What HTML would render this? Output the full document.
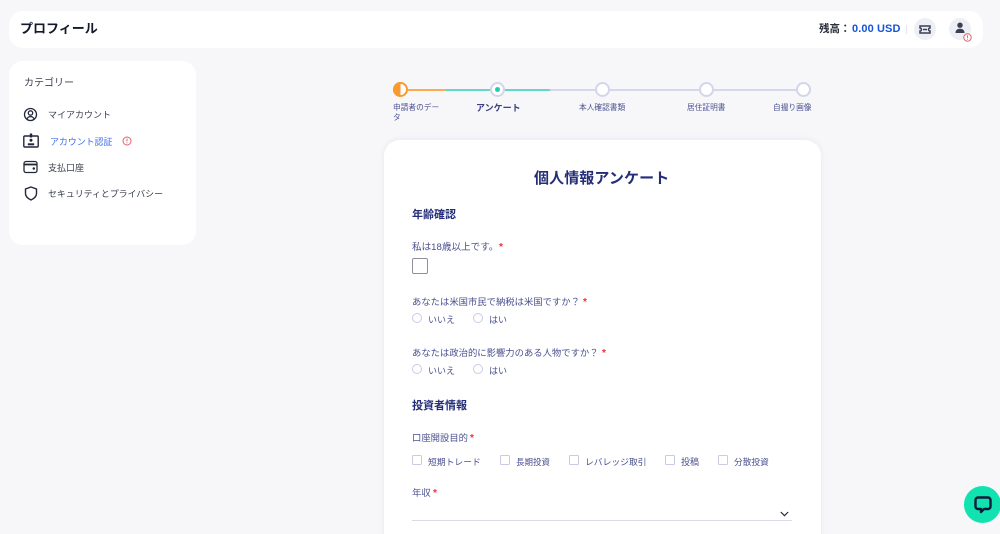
<!DOCTYPE html>
<html lang="ja"><head><meta charset="utf-8"><title>プロフィール</title>
<style>
html,body{margin:0;padding:0;width:1000px;height:534px;overflow:hidden}
body{background:#f7f7fa;font-family:"Liberation Sans","Noto Sans CJK JP",sans-serif}
#w{position:relative;width:1000px;height:534px;overflow:hidden}
.a{position:absolute;white-space:nowrap}
.box{position:absolute;background:#fff}
.lab{color:#4b5190;font-size:9.33px;line-height:14px}
.opt{color:#4b5190;font-size:9px;line-height:14px}
.side{color:#3a3f4c;font-size:9px;line-height:14px}
.step{color:#4b5190;font-size:7.7px;line-height:11px}
.h{color:#232d78;font-size:11px;font-weight:700;line-height:15px}
.r{color:#f0303c;font-size:10px;font-weight:700;line-height:14px}
.rad{position:absolute;width:8px;height:8px;border:1.2px solid #c9cbe4;border-radius:50%;background:#fff}
.chk{position:absolute;width:8px;height:8px;border:1.2px solid #c9cbe4;border-radius:1.5px;background:#fff}
.c{position:absolute;width:11px;height:11px;border:2px solid #d3d5ea;border-radius:50%;background:#fff}
.l{position:absolute;height:2px;top:89px}
</style></head><body><div id="w">
<div class="box" style="left:9px;top:11px;width:974px;height:37px;border-radius:14px"></div>
<div class="a" style="left:20px;top:20px;font-size:13px;font-weight:700;color:#14182a;line-height:18px">プロフィール</div>
<div class="a" style="left:819px;top:22px;font-size:10.5px;font-weight:700;color:#2b2f3a;line-height:14px">残高：</div>
<div class="a" style="left:852px;top:22px;font-size:11px;font-weight:700;color:#1553d8;line-height:14px;letter-spacing:.1px">0.00 USD</div>
<div class="box" style="left:906px;top:25px;width:1px;height:9px;background:#e6e7ee"></div>
<div class="box" style="left:914px;top:18px;width:22px;height:22px;border-radius:50%;background:#eeeff5"></div>
<svg class="a" style="left:919px;top:25px" width="12" height="9" viewBox="0 0 12 9" fill="none" stroke="#3a3f55" stroke-width="1.500"><path d="M1 1h10v2a1.500 1.500 0 0 0 0 3v2H1V6a1.500 1.500 0 0 0 0-3z"/><path d="M4 4.500h4"/></svg>
<div class="box" style="left:949px;top:18px;width:22px;height:22px;border-radius:50%;background:#eeeff5"></div>
<svg class="a" style="left:954px;top:22px" width="12" height="12" viewBox="0 0 12 12" fill="#3a3f55"><circle cx="6" cy="3.200" r="2.700"/><path d="M1.500 11c0-3 2-4.200 4.500-4.200s4.500 1.200 4.500 4.200z"/></svg>
<svg class="a" style="left:963px;top:33px" width="9" height="9" viewBox="0 0 9 9"><circle cx="4.500" cy="4.500" r="3.700" fill="#fff" stroke="#e4626a" stroke-width="1"/><path d="M4.500 2.400v2.500M4.500 5.800v.8" stroke="#e4626a" stroke-width="1"/></svg>

<div class="box" style="left:9px;top:61px;width:187px;height:184px;border-radius:14px"></div>
<div class="a" style="left:24px;top:76px;font-size:10px;color:#3a3f4c;line-height:15px">カテゴリー</div>
<svg class="a" style="left:23px;top:107px" width="15" height="15" viewBox="0 0 15 15" fill="none" stroke="#23273a" stroke-width="1.300"><circle cx="7.500" cy="7.500" r="6"/><circle cx="7.500" cy="6" r="2.200"/><path d="M3.800 12c.8-1.800 2-2.400 3.700-2.400s2.900.6 3.700 2.400"/></svg>
<div class="a side" style="left:48px;top:108px">マイアカウント</div>
<svg class="a" style="left:23px;top:133px" width="16" height="15" viewBox="0 0 16 15" fill="none" stroke="#23273a" stroke-width="1.400"><rect x=".8" y="3" width="14.400" height="11" rx="1"/><path d="M8 .5v4" stroke-width="2.400"/><circle cx="8" cy="7.200" r="1.500" fill="#23273a" stroke="none"/><path d="M4.800 11.300h6.400" stroke-width="2"/></svg>
<div class="a side" style="left:50px;top:135px;color:#3f6fe6;letter-spacing:-.1px">アカウント認証</div>
<svg class="a" style="left:122px;top:136px" width="10" height="10" viewBox="0 0 10 10"><circle cx="5" cy="5" r="4" fill="#fff" stroke="#e4626a" stroke-width="1"/><path d="M5 2.600v2.800M5 6.400v.9" stroke="#e4626a" stroke-width="1"/></svg>
<svg class="a" style="left:23px;top:160px" width="15" height="14" viewBox="0 0 15 14" fill="none" stroke="#23273a" stroke-width="1.300"><rect x="1" y="1.500" width="13" height="11" rx="2"/><path d="M1 4.500h13" stroke-width="1.800"/><circle cx="10.800" cy="8.500" r=".6" fill="#23273a"/></svg>
<div class="a side" style="left:48px;top:161px">支払口座</div>
<svg class="a" style="left:24px;top:186px" width="14" height="15" viewBox="0 0 14 15" fill="none" stroke="#23273a" stroke-width="1.400"><path d="M7 1l5.500 2v4.500c0 3-2.300 5-5.500 6.500C3.800 12.500 1.500 10.500 1.500 7.500V3z"/></svg>
<div class="a side" style="left:48px;top:187px;letter-spacing:-.1px">セキュリティとプライバシー</div>

<div class="l" style="left:401px;width:45px;background:#fbab52"></div>
<div class="l" style="left:446px;width:104px;background:#62d8c8"></div>
<div class="l" style="left:550px;width:254px;background:#d5d7ea"></div>
<div class="a" style="left:393px;top:82px;width:15px;height:15px;border-radius:50%;background:linear-gradient(90deg,#fb9a2c 50%,#fff 50%);box-shadow:inset 0 0 0 2px #fb9a2c"></div>
<div class="c" style="left:490px;top:82px"></div>
<div class="a" style="left:495px;top:87px;width:5px;height:5px;border-radius:50%;background:#22cdb8"></div>
<div class="c" style="left:595px;top:82px"></div>
<div class="c" style="left:699px;top:82px"></div>
<div class="c" style="left:796px;top:82px"></div>
<div class="a step" style="left:393px;top:103px;width:47px;white-space:normal;line-height:10px">申請者のデータ</div>
<div class="a" style="left:476px;top:102px;font-size:9px;font-weight:700;color:#3a4080;line-height:13px">アンケート</div>
<div class="a step" style="left:579px;top:102px">本人確認書類</div>
<div class="a step" style="left:687px;top:102px">居住証明書</div>
<div class="a step" style="left:773px;top:102px">自撮り画像</div>

<div class="box" style="left:384px;top:140px;width:437px;height:420px;border-radius:16px;box-shadow:0 -1px 6px rgba(60,60,90,.07)"></div>
<div class="a" style="left:534px;top:169px;font-size:15px;font-weight:700;color:#232d78;line-height:20px;letter-spacing:.1px">個人情報アンケート</div>
<div class="a h" style="left:412px;top:208px">年齢確認</div>
<div class="a lab" style="left:412px;top:241px;font-size:9.600px">私は18歳以上です。</div><div class="a r" style="left:499px;top:241px">*</div>
<div class="a" style="left:412px;top:258px;width:14px;height:14px;border:1.200px solid #8f909c;border-radius:2px;background:#fff"></div>

<div class="a lab" style="left:412px;top:295px">あなたは米国市民で納税は米国ですか？</div><div class="a r" style="left:583px;top:296px">*</div>
<div class="rad" style="left:412px;top:313px"></div><div class="a opt" style="left:428px;top:313px">いいえ</div>
<div class="rad" style="left:473px;top:313px"></div><div class="a opt" style="left:489px;top:313px">はい</div>

<div class="a lab" style="left:412px;top:346px">あなたは政治的に影響力のある人物ですか？</div><div class="a r" style="left:602px;top:347px">*</div>
<div class="rad" style="left:412px;top:364px"></div><div class="a opt" style="left:428px;top:364px">いいえ</div>
<div class="rad" style="left:473px;top:364px"></div><div class="a opt" style="left:489px;top:364px">はい</div>

<div class="a h" style="left:412px;top:399px">投資者情報</div>
<div class="a lab" style="left:412px;top:431px">口座開設目的</div><div class="a r" style="left:470px;top:432px">*</div>
<div class="chk" style="left:412px;top:455px"></div><div class="a opt" style="left:428px;top:455px;font-size:8.800px">短期トレード</div>
<div class="chk" style="left:500px;top:455px"></div><div class="a opt" style="left:516px;top:455px;font-size:8.500px">長期投資</div>
<div class="chk" style="left:569px;top:455px"></div><div class="a opt" style="left:585px;top:455px;font-size:8.800px">レバレッジ取引</div>
<div class="chk" style="left:665px;top:455px"></div><div class="a opt" style="left:681px;top:455px">投稿</div>
<div class="chk" style="left:718px;top:455px"></div><div class="a opt" style="left:734px;top:455px;font-size:8.700px">分散投資</div>
<div class="a lab" style="left:412px;top:486px">年収</div><div class="a r" style="left:433px;top:487px">*</div>
<svg class="a" style="left:780px;top:511px" width="9" height="6" viewBox="0 0 9 6" fill="none" stroke="#23273a" stroke-width="1.200"><path d="M.8 1l3.700 3.700L8.200 1"/></svg>
<div class="box" style="left:412px;top:520px;width:380px;height:1px;background:#d9daea"></div>

<div class="a" style="left:964px;top:486px;width:37px;height:37px;border-radius:50%;background:#10e3b0"></div>
<svg class="a" style="left:974px;top:496px" width="18" height="18" viewBox="0 0 18 18" fill="none" stroke="#0b1c3a" stroke-width="2.400" stroke-linejoin="round"><path d="M4 1.500h10a2.500 2.500 0 0 1 2.500 2.500v6.500a2.500 2.500 0 0 1-2.500 2.500h-4l-3 3v-3H4a2.500 2.500 0 0 1-2.500-2.500V4A2.500 2.500 0 0 1 4 1.500z"/></svg>
</div></body></html>
